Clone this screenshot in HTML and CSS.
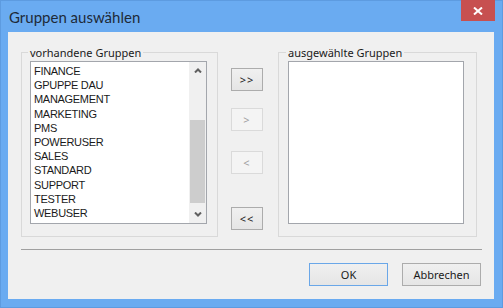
FILE: index.html
```html
<!DOCTYPE html>
<html lang="de">
<head>
<meta charset="UTF-8">
<title>Gruppen auswählen</title>
<link rel="stylesheet" href="styles.css">
</head>
<body>
    <div class="window">
        <div class="titlebar">
            <span class="title">Gruppen auswählen</span>
            <span class="close">
                <svg viewBox="0 0 10 8" width="10" height="8">
                    <path d="M1 0.5 L9 7.5 M9 0.5 L1 7.5" stroke="#fff" stroke-width="2" fill="none"/>
                </svg>
            </span>
        </div>

        <div class="client">
            <div class="lists">
                <fieldset class="group group-left">
                    <legend>vorhandene Gruppen</legend>
                    <div class="listbox listbox-left">
                        <ul class="items">
                            <li>FINANCE</li>
                            <li>GPUPPE DAU</li>
                            <li>MANAGEMENT</li>
                            <li>MARKETING</li>
                            <li>PMS</li>
                            <li>POWERUSER</li>
                            <li>SALES</li>
                            <li>STANDARD</li>
                            <li>SUPPORT</li>
                            <li>TESTER</li>
                            <li>WEBUSER</li>
                        </ul>
                        <div class="scrollbar">
                            <span class="arrow">
                                <svg viewBox="0 0 8 5" width="8" height="5">
                                    <path d="M1 4.5 L4 1.5 L7 4.5" stroke="#606060" stroke-width="2" fill="none"/>
                                </svg>
                            </span>
                            <div class="track"><div class="thumb"></div></div>
                            <span class="arrow">
                                <svg viewBox="0 0 8 5" width="8" height="5">
                                    <path d="M1 0.5 L4 3.5 L7 0.5" stroke="#606060" stroke-width="2" fill="none"/>
                                </svg>
                            </span>
                        </div>
                    </div>
                </fieldset>

                <div class="movers">
                    <button class="btn mover">&gt;&gt;</button>
                    <button class="btn mover" disabled>&gt;</button>
                    <button class="btn mover" disabled>&lt;</button>
                    <button class="btn mover">&lt;&lt;</button>
                </div>

                <fieldset class="group group-right">
                    <legend>ausgewählte Gruppen</legend>
                    <div class="listbox listbox-right"></div>
                </fieldset>
            </div>

            <div class="separator"></div>

            <div class="actions">
                <button class="btn action default">OK</button>
                <button class="btn action">Abbrechen</button>
            </div>
        </div>
    </div>
</body>
</html>
```

FILE: styles.css
```css
html, body {
    margin: 0;
    padding: 0;
    background-color: #6aabf1;
}

.window {
    width: 503px;
    height: 308px;
    box-sizing: border-box;
    display: flex;
    flex-direction: column;
    padding: 0 8px 8px 7px;
    background-color: #6aabf1;
    border: 1px solid #5d9be0;
}

/* title bar */
.titlebar {
    height: 31px;
    display: flex;
    align-items: flex-start;
    justify-content: space-between;
}
.title {
    margin: 7px 0 0 1px;
    font-family: Lato, "Noto Sans", sans-serif;
    font-size: 15px;
    line-height: 19px;
    color: #1e2a38;
}
.close {
    width: 34px;
    height: 21px;
    margin: -1px -1px 0 0;
    background-color: #c75050;
    display: flex;
    align-items: center;
    justify-content: center;
}
.close svg {
    display: block;
}

/* client area */
.client {
    flex: 1;
    display: flex;
    flex-direction: column;
    padding: 14px 0 0 13px;
    background-color: #f0f0f0;
    font-family: "Noto Sans", sans-serif;
    font-size: 11px;
    color: #1a1a1a;
}

.lists {
    display: flex;
    align-items: flex-start;
}

.group {
    margin: 0;
    padding: 0;
    min-width: 0;
    height: 191px;
    box-sizing: border-box;
    border: 1px solid #d9d9d9;
}
.group legend {
    margin-left: -2px;
    padding: 0 2px;
    line-height: 13px;
}
.group-left {
    width: 197px;
    padding-left: 8px;
}
.group-right {
    width: 199px;
    margin-left: 15px;
    padding-left: 9px;
}

.listbox {
    margin-top: 2px;
    height: 163px;
    box-sizing: border-box;
    display: flex;
    background-color: #fff;
    border: 1px solid #a3a6ac;
}
.listbox-left {
    width: 177px;
}
.listbox-right {
    width: 176px;
}

.items {
    flex: 1;
    margin: 0;
    padding: 2px 0 0 3px;
    list-style: none;
    font-family: "Liberation Sans", Arial, sans-serif;
    letter-spacing: -0.3px;
    line-height: 14.2px;
    white-space: nowrap;
    overflow: hidden;
}

.scrollbar {
    width: 17px;
    display: flex;
    flex-direction: column;
    background-color: #f0f0f0;
}
.arrow {
    height: 17px;
    display: flex;
    align-items: center;
    justify-content: center;
}
.arrow svg {
    display: block;
}
.track {
    flex: 1;
}
.thumb {
    margin: 41px 1px 0 1px;
    height: 83px;
    background-color: #cdcdcd;
}

/* buttons */
.btn {
    margin: 0;
    padding: 0;
    box-sizing: border-box;
    font-family: "Noto Sans", sans-serif;
    font-size: 11px;
    color: #1a1a1a;
    background: linear-gradient(#f0f0f0, #e5e5e5);
    border: 1px solid #acacac;
}
.btn:disabled {
    color: #a0a0a0;
    background: #f4f4f4;
    border-color: #dadada;
}

.movers {
    width: 32px;
    margin-left: 13px;
    padding-top: 22px;
    display: flex;
    flex-direction: column;
}
.mover {
    width: 32px;
    height: 23px;
    letter-spacing: 1px;
}
.mover:nth-child(2) {
    margin-top: 17px;
}
.mover:nth-child(3) {
    margin-top: 20px;
}
.mover:nth-child(4) {
    margin-top: 33px;
}

.separator {
    margin: 12px 12px 0 0;
    height: 1px;
    background-color: #a0a0a0;
}

.actions {
    display: flex;
    justify-content: flex-end;
    gap: 14px;
    margin: 13px 13px 0 0;
}
.action {
    width: 79px;
    height: 23px;
}
.action.default {
    border-color: #6aa7e8;
}
```
